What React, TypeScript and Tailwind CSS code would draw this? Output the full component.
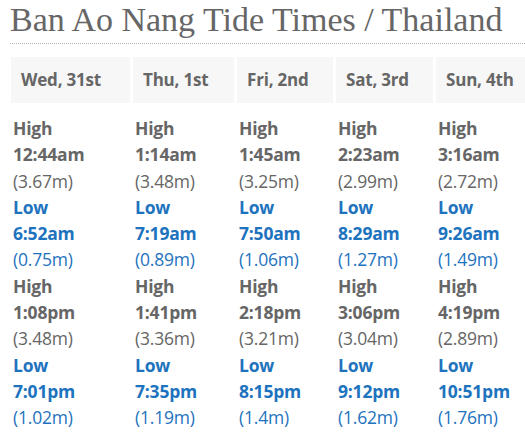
import React from "react";

type Tide = { kind: "High" | "Low"; time: string; height: string };

const days: { label: string; tides: Tide[] }[] = [
  {
    label: "Wed, 31st",
    tides: [
      { kind: "High", time: "12:44am", height: "(3.67m)" },
      { kind: "Low", time: "6:52am", height: "(0.75m)" },
      { kind: "High", time: "1:08pm", height: "(3.48m)" },
      { kind: "Low", time: "7:01pm", height: "(1.02m)" },
    ],
  },
  {
    label: "Thu, 1st",
    tides: [
      { kind: "High", time: "1:14am", height: "(3.48m)" },
      { kind: "Low", time: "7:19am", height: "(0.89m)" },
      { kind: "High", time: "1:41pm", height: "(3.36m)" },
      { kind: "Low", time: "7:35pm", height: "(1.19m)" },
    ],
  },
  {
    label: "Fri, 2nd",
    tides: [
      { kind: "High", time: "1:45am", height: "(3.25m)" },
      { kind: "Low", time: "7:50am", height: "(1.06m)" },
      { kind: "High", time: "2:18pm", height: "(3.21m)" },
      { kind: "Low", time: "8:15pm", height: "(1.4m)" },
    ],
  },
  {
    label: "Sat, 3rd",
    tides: [
      { kind: "High", time: "2:23am", height: "(2.99m)" },
      { kind: "Low", time: "8:29am", height: "(1.27m)" },
      { kind: "High", time: "3:06pm", height: "(3.04m)" },
      { kind: "Low", time: "9:12pm", height: "(1.62m)" },
    ],
  },
  {
    label: "Sun, 4th",
    tides: [
      { kind: "High", time: "3:16am", height: "(2.72m)" },
      { kind: "Low", time: "9:26am", height: "(1.49m)" },
      { kind: "High", time: "4:19pm", height: "(2.89m)" },
      { kind: "Low", time: "10:51pm", height: "(1.76m)" },
    ],
  },
];

const App = () => {
  return (
    <div
      className="w-[525px] h-[435px] overflow-hidden bg-white pl-[10px]"
      style={{ fontFamily: "'Open Sans', sans-serif" }}
    >
      <h1
        className="pt-[2px] pb-[5px] text-[34px] leading-[36px] text-[#666666] border-b border-dotted border-[#b5b5b5]"
        style={{ fontFamily: "'Liberation Serif', serif" }}
      >
        Ban Ao Nang Tide Times / Thailand
      </h1>

      <div className="mt-[13px] ml-[1px] grid grid-cols-[119px_101px_96px_97px_100px] gap-x-[3px] w-max">
        {days.map((day) => (
          <div
            key={day.label}
            className="h-[46px] bg-[#f7f7f7] px-[10px] flex items-center text-[17px] font-bold text-[#666666] tracking-[-0.2px]"
          >
            {day.label}
          </div>
        ))}

        {days.map((day) => (
          <div
            key={day.label + "-body"}
            className="pt-[12px] pl-[2px] flex flex-col text-[17.5px] leading-[26.3px] tracking-[-0.2px]"
          >
            {day.tides.map((t, i) => {
              const color = t.kind === "High" ? "text-[#666666]" : "text-[#1e73be]";
              return (
                <div key={i} className={color}>
                  <div className="font-bold">{t.kind}</div>
                  <div className="font-bold">{t.time}</div>
                  <div>{t.height}</div>
                </div>
              );
            })}
          </div>
        ))}
      </div>
    </div>
  );
};

export default App;
